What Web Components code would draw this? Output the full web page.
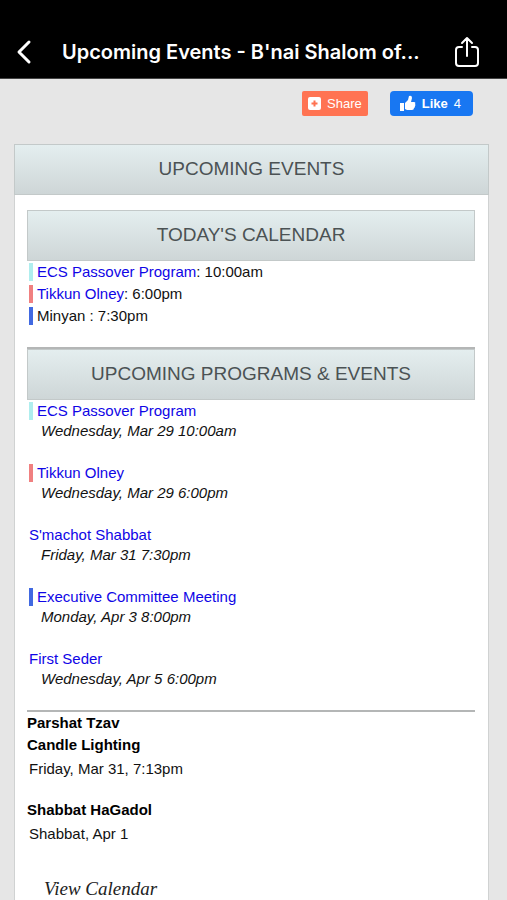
<!DOCTYPE html>
<html lang="en">
<head>
<meta charset="utf-8">
<meta name="viewport" content="width=device-width, initial-scale=1">
<title>Upcoming Events</title>
<style>
body { margin: 0; background: #e6e6e6; color: #111; font: 15px/22px "Liberation Sans", Arial, sans-serif; }
</style>
</head>
<body>
<events-page></events-page>
<script>
const define = (name, html) => {
  const template = document.createElement('template');
  template.innerHTML = html;
  customElements.define(name, class extends HTMLElement {
    constructor() {
      super();
      this.attachShadow({ mode: 'open' }).append(template.content.cloneNode(true));
    }
  });
};

define('app-bar', `
<style>
:host { display: flex; align-items: center; box-sizing: border-box; height: 79px; padding: 26px 24px 0 12px; background: #000; color: #fff; border-bottom: 1px solid #444; }
button { display: flex; padding: 0; border: 0; background: none; color: inherit; }
h1 { flex: 1; margin: 0 0 0 26px; font: 600 20px/28px Inter, sans-serif; white-space: nowrap; }
svg { display: block; fill: none; stroke: currentColor; stroke-linecap: round; stroke-linejoin: round; }
</style>
<button aria-label="Back"><svg width="24" height="28" viewBox="0 0 24 28" stroke-width="3"><path d="M17 4 7 14l10 10"/></svg></button>
<h1><slot></slot></h1>
<button aria-label="Share page"><svg width="32" height="34" viewBox="0 0 32 34" stroke-width="2"><path d="M11 12H8q-3 0-3 3v13q0 3 3 3h16q3 0 3-3V15q0-3-3-3h-3M16 21V3M11 8l5-5 5 5"/></svg></button>
`);

define('share-button', `
<style>
:host { display: block; }
button { display: flex; align-items: center; gap: 6px; height: 25px; padding: 0 6px; border: 0; border-radius: 2px; background: #ff7352; color: #fff; font: 13px/24px "Liberation Sans", Arial, sans-serif; }
</style>
<button><svg width="13" height="13" viewBox="0 0 26 26"><rect width="26" height="26" rx="4" fill="#fff"/><path d="M13 7v12M7 13h12" stroke="#ff7352" stroke-width="4"/></svg><slot></slot></button>
`);

define('like-button', `
<style>
:host { display: block; }
button { display: flex; align-items: center; gap: 6px; height: 25px; padding: 0 12px 0 9px; border: 0; border-radius: 4px; background: #1877f2; color: #fff; font: 13px/24px "Liberation Sans", Arial, sans-serif; }
b { font-weight: 700; }
</style>
<button><svg width="17" height="17" viewBox="0 0 17 17" fill="#fff"><path d="M1 8h4v8H1zM6 8l3-3 1-4q3-1 3 2l-1 4h3q2 0 1 2 1 1 0 2 0 2-1 2 0 2-2 2H8l-2-1z"/></svg><b><slot></slot></b><slot name="count"></slot></button>
`);

define('section-heading', `
<style>
:host { display: block; border: 1px solid #c3c9c9; background: linear-gradient(#e4eeef, #ced6d7); color: #4b5254; }
h2 { margin: 0; padding: 13px 8px 14px; font: 19px/22px "Liberation Sans", Arial, sans-serif; text-align: center; text-transform: uppercase; }
</style>
<h2><slot></slot></h2>
`);

define('event-name', `
<style>
:host { display: flex; align-items: center; gap: 4px; line-height: 22px; }
:host([tag])::before { content: ""; width: 4px; height: 18px; background: var(--tag); }
:host([tag="aqua"]) { --tag: #afeeee; }
:host([tag="coral"]) { --tag: #f08080; }
:host([tag="blue"]) { --tag: #4169e1; }
</style>
<span><slot></slot></span>
`);

define('event-item', `
<style>
:host { display: block; margin-bottom: 22px; }
em { display: block; padding-left: 12px; line-height: 18px; }
</style>
<slot></slot><em><slot name="when"></slot></em>
`);

define('shabbat-note', `
<style>
:host { display: block; margin-bottom: 19px; }
strong { display: block; color: #000; }
div { padding: 2px 2px 0; }
</style>
<strong><slot></slot></strong><div><slot name="detail"></slot></div>
`);

define('events-page', `
<style>
:host { display: block; }
.social { display: flex; justify-content: flex-end; gap: 22px; padding: 12px 34px 28px 14px; }
main { margin: 0 18px 0 14px; border: 1px solid #d0d2d2; border-top: 0; background: #fff; }
main > section-heading { margin: 0 -1px; }
.content { padding: 15px 13px 24px 12px; }
.list { padding: 0 2px; }
.today { padding-bottom: 20px; }
a { color: #0f05e6; text-decoration: none; }
hr { margin: 0; border: 0; border-top: 2px solid #b4b6b6; }
.view { display: inline-block; margin: 13px 0 0 17px; color: #222; font: italic 19px/24px Georgia, "Liberation Serif", serif; }
strong { display: block; color: #000; }
</style>
<app-bar>Upcoming Events - B'nai Shalom of...</app-bar>
<div class="social"><share-button>Share</share-button><like-button>Like<span slot="count">4</span></like-button></div>
<main>
<section-heading>Upcoming Events</section-heading>
<div class="content">
<section-heading>Today's Calendar</section-heading>
<div class="list today">
<event-name tag="aqua"><a href="#ecs">ECS Passover Program</a>: 10:00am</event-name>
<event-name tag="coral"><a href="#tikkun">Tikkun Olney</a>: 6:00pm</event-name>
<event-name tag="blue">Minyan : 7:30pm</event-name>
</div>
<hr>
<section-heading>Upcoming Programs &amp; Events</section-heading>
<div class="list">
<event-item><event-name tag="aqua"><a href="#ecs">ECS Passover Program</a></event-name><span slot="when">Wednesday, Mar 29 10:00am</span></event-item>
<event-item><event-name tag="coral"><a href="#tikkun">Tikkun Olney</a></event-name><span slot="when">Wednesday, Mar 29 6:00pm</span></event-item>
<event-item><event-name><a href="#smachot">S'machot Shabbat</a></event-name><span slot="when">Friday, Mar 31 7:30pm</span></event-item>
<event-item><event-name tag="blue"><a href="#committee">Executive Committee Meeting</a></event-name><span slot="when">Monday, Apr 3 8:00pm</span></event-item>
<event-item><event-name><a href="#seder">First Seder</a></event-name><span slot="when">Wednesday, Apr 5 6:00pm</span></event-item>
</div>
<hr>
<strong>Parshat Tzav</strong>
<shabbat-note>Candle Lighting<span slot="detail">Friday, Mar 31, 7:13pm</span></shabbat-note>
<shabbat-note>Shabbat HaGadol<span slot="detail">Shabbat, Apr 1</span></shabbat-note>
<a class="view" href="#calendar">View Calendar</a>
</div>
</main>
`);
</script>
</body>
</html>
